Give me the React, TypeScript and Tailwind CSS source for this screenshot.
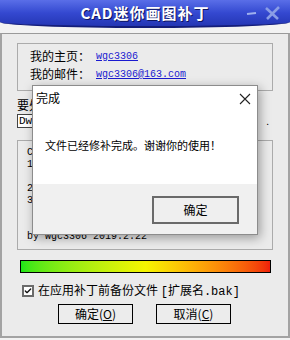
import { Check } from 'lucide-react';

const mono = "font-['Liberation_Mono','Noto_Sans_CJK_SC',monospace]";

function WinButton({ label, hot }: { label: string; hot: string }) {
  return (
    <button className="w-[75px] h-[20px] border border-black bg-[#ececec] text-[12px] leading-none flex items-center justify-center">
      {label}(<span className="underline">{hot}</span>)
    </button>
  );
}

function DoneDialog() {
  return (
    <div className="absolute left-[32px] top-[85px] w-[226px] h-[150px] border border-[#8c8c8c] bg-[#f0f0f0] shadow-[2px_3px_10px_rgba(0,0,0,0.35)] flex flex-col">
      <div className="bg-white h-[98px] flex flex-col">
        <div className="h-[24px] flex items-center justify-between pl-[3px] pr-[6px]">
          <span className="text-[12px]">完成</span>
          <svg width="12" height="12" viewBox="0 0 12 12" className="mt-[2px]">
            <path d="M1 1 L11 11 M11 1 L1 11" stroke="#222" strokeWidth="1.1" />
          </svg>
        </div>
        <div className="pl-[12px] pt-[30px] text-[11px] leading-none">文件已经修补完成。谢谢你的使用！</div>
      </div>
      <div className="flex justify-end pr-[18px] pt-[12px]">
        <button className="w-[87px] h-[28px] border-2 border-[#6a6a6a] bg-[#efefef] text-[12px] flex items-center justify-center">
          确定
        </button>
      </div>
    </div>
  );
}

export default function App() {
  return (
    <div className="w-[290px] h-[340px] bg-[#f2f2f2] relative overflow-hidden flex flex-col font-['Noto_Sans_CJK_SC',sans-serif] text-black">
      {/* title bar */}
      <div className="h-[28px] shrink-0 bg-gradient-to-b from-[#5a6ee8] via-[#3448d0] to-[#2436b4] border-b-2 border-[#141d78] rounded-b-[145px_6px] flex items-center justify-center relative">
        <span className="text-white font-bold text-[15px] tracking-[1px] [text-shadow:1px_1px_0_#0d1560]">CAD迷你画图补丁</span>
        <svg width="40" height="16" viewBox="0 0 40 16" className="absolute right-[5px] top-[5px]">
          <path d="M2 9 L11 8" stroke="#9fb0ee" strokeWidth="2.2" />
          <path d="M21 3 L33 14 M34 2 L22 14" stroke="#8a9de6" strokeWidth="2.6" />
        </svg>
      </div>

      {/* window body */}
      <div className="flex-1 mt-[5px] mb-[2px] bg-[#ebebeb] border-t border-x-2 border-b-2 border-t-[#9a9a9a] border-x-[#a3a3a3] border-b-[#a3a3a3] px-[15px] flex flex-col">
        <div className="mt-[9px] h-[48px] border border-[#ababab] pt-[3px] pl-[12px] text-[12px]">
          <div className="h-[18px] flex items-center">
            <span className="w-[66px]">我的主页：</span>
            <span className={`${mono} text-[10px] text-[#1a1ad0] underline`}>wgc3306</span>
          </div>
          <div className="h-[18px] flex items-center">
            <span className="w-[66px]">我的邮件：</span>
            <span className={`${mono} text-[10px] text-[#1a1ad0] underline`}>wgc3306@163.com</span>
          </div>
        </div>

        <div className="mt-[7px] h-[14px] leading-[14px] text-[12px]">要处理的文件</div>
        <div className="mt-[2px] flex items-center">
          <div className={`h-[14px] flex-1 mr-[16px] border border-[#444] bg-white ${mono} text-[11px] leading-[12px] pl-[1px]`}>Dwg</div>
          <span className="text-[10px] leading-none mr-[4px]">.</span>
        </div>

        <div className={`mt-[12px] h-[110px] border border-[#ababab] pt-[6px] pl-[9px] ${mono} text-[10px] leading-[12px]`}>
          <div>CAD迷你画图补丁说明</div>
          <div>1、修复文件打开错误</div>
          <div>&nbsp;</div>
          <div>2、请先关闭CAD</div>
          <div>3、选择文件后确定</div>
          <div>&nbsp;</div>
          <div>&nbsp;</div>
          <div>by wgc3306 2019.2.22</div>
        </div>

        <div className="mt-[10px] ml-[3px] mr-[2px] h-[13px] border border-black bg-gradient-to-r from-[#19e619] via-[#f5f500] to-[#f01e0a]" />

        <div className="mt-[11px] h-[13px] ml-[5px] flex items-center text-[12px]">
          <div className="w-[12px] h-[12px] border-2 border-[#6b6b6b] bg-white flex items-center justify-center">
            <Check size={10} strokeWidth={4} color="#111" />
          </div>
          <span className="ml-[4px] whitespace-nowrap">在应用补丁前备份文件 <span className={mono}>[</span>扩展名<span className={mono}>.bak]</span></span>
        </div>

        <div className="mt-[7px] ml-[41px] flex gap-[23px]">
          <WinButton label="确定" hot="O" />
          <WinButton label="取消" hot="C" />
        </div>
      </div>

      <DoneDialog />
    </div>
  );
}
